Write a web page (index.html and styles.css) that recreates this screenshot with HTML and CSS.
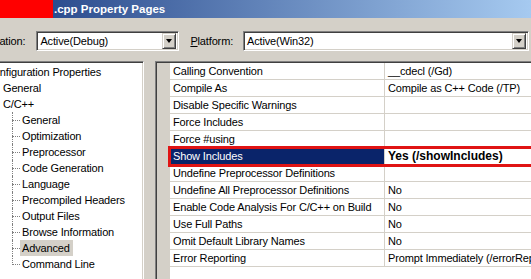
FILE: index.html
```html
<!DOCTYPE html>
<html lang="en">
<head>
    <meta charset="UTF-8">
    <title>Property Pages</title>
    <link rel="stylesheet" href="styles.css">
</head>
<body>
<div class="window">
    <div class="titlebar">
        <span class="redact"></span>
        <span class="title">.cpp Property Pages</span>
    </div>

    <div class="toolbar">
        <label class="cfg-label">Configuration:</label>
        <div class="combo combo-config">
            <span class="combo-text">Active(Debug)</span>
            <span class="drop"></span>
        </div>
        <label class="plat-label"><u>P</u>latform:</label>
        <div class="combo combo-platform">
            <span class="combo-text">Active(Win32)</span>
            <span class="drop"></span>
        </div>
    </div>

    <div class="main">
        <div class="tree">
            <div class="node root">Configuration Properties</div>
            <div class="node lvl1">General</div>
            <div class="node lvl1">C/C++</div>
            <ul class="children">
                <li>General</li>
                <li>Optimization</li>
                <li>Preprocessor</li>
                <li>Code Generation</li>
                <li>Language</li>
                <li>Precompiled Headers</li>
                <li>Output Files</li>
                <li>Browse Information</li>
                <li><span class="sel">Advanced</span></li>
                <li>Command Line</li>
            </ul>
        </div>

        <div class="grid">
            <div class="gutter"></div>
            <div class="rows">
                <div class="row"><div class="name">Calling Convention</div><div class="value">__cdecl (/Gd)</div></div>
                <div class="row"><div class="name">Compile As</div><div class="value">Compile as C++ Code (/TP)</div></div>
                <div class="row"><div class="name">Disable Specific Warnings</div><div class="value"></div></div>
                <div class="row"><div class="name">Force Includes</div><div class="value"></div></div>
                <div class="row"><div class="name">Force #using</div><div class="value"></div></div>
                <div class="row selected"><div class="name">Show Includes</div><div class="value">Yes (/showIncludes)</div></div>
                <div class="row"><div class="name">Undefine Preprocessor Definitions</div><div class="value"></div></div>
                <div class="row"><div class="name">Undefine All Preprocessor Definitions</div><div class="value">No</div></div>
                <div class="row"><div class="name">Enable Code Analysis For C/C++ on Build</div><div class="value">No</div></div>
                <div class="row"><div class="name">Use Full Paths</div><div class="value">No</div></div>
                <div class="row"><div class="name">Omit Default Library Names</div><div class="value">No</div></div>
                <div class="row"><div class="name">Error Reporting</div><div class="value">Prompt Immediately (/errorReport:prompt)</div></div>
            </div>
        </div>
    </div>
</div>
</body>
</html>
```

FILE: styles.css
```css
body {
    margin: 0;
    font-family: "Liberation Sans", Arial, sans-serif;
    font-size: 11px;
    letter-spacing: -0.15px;
    color: #000;
    background: #d4d0c8;
    overflow: hidden;
}

.window {
    width: 531px;
    height: 279px;
    overflow: hidden;
    display: flex;
    flex-direction: column;
}

/* title bar */
.titlebar {
    height: 18px;
    flex-shrink: 0;
    display: flex;
    align-items: center;
    background: linear-gradient(to right, #1f3f84, #a6caf0);
}

.redact {
    width: 53px;
    height: 18px;
    background: #ff0000;
}

.title {
    color: #fff;
    font-weight: bold;
    font-size: 11.5px;
    letter-spacing: 0;
    padding-left: 1px;
}

/* configuration / platform bar */
.toolbar {
    height: 43px;
    flex-shrink: 0;
    box-sizing: border-box;
    padding-top: 13px;
    display: flex;
    align-items: flex-start;
}

.cfg-label,
.plat-label {
    line-height: 20px;
    white-space: nowrap;
}

.cfg-label {
    margin-left: -41px;
    margin-right: 11px;
}

.plat-label {
    margin-left: 11px;
}

.combo {
    height: 20px;
    box-sizing: border-box;
    background: #fff;
    border: 1px solid;
    border-color: #808080 #fff #fff #808080;
    box-shadow: inset 1px 1px 0 #404040, inset -1px -1px 0 #d4d0c8;
    display: flex;
    align-items: center;
    padding: 0 2px 0 3px;
}

.combo-config {
    width: 143px;
}

.combo-platform {
    width: 286px;
    margin-left: auto;
    margin-right: 2px;
}

.combo-text {
    flex: 1;
    white-space: nowrap;
}

.drop {
    width: 14px;
    height: 16px;
    box-sizing: border-box;
    background: #d4d0c8;
    border: 1px solid;
    border-color: #d4d0c8 #404040 #404040 #d4d0c8;
    box-shadow: inset 1px 1px 0 #fff, inset -1px -1px 0 #808080;
    display: flex;
    align-items: center;
    justify-content: center;
}

.drop::after {
    content: "";
    border-left: 3.5px solid transparent;
    border-right: 3.5px solid transparent;
    border-top: 4px solid #000;
}

/* lower panels */
.main {
    flex: 1;
    min-height: 0;
    display: flex;
}

.tree {
    width: 144px;
    flex-shrink: 0;
    box-sizing: border-box;
    background: #fff;
    border-top: 1px solid #808080;
    border-right: 1px solid #fff;
    box-shadow: inset 0 1px 0 #404040, inset -1px 0 0 #d4d0c8;
    padding-top: 2px;
}

.node {
    line-height: 16px;
    white-space: nowrap;
}

.root {
    margin-left: -14px;
}

.lvl1 {
    padding-left: 3px;
}

.children {
    list-style: none;
    margin: 0;
    padding: 0;
}

.children li {
    position: relative;
    line-height: 16px;
    padding-left: 22px;
    white-space: nowrap;
}

.children li::before {
    content: "";
    position: absolute;
    left: 12px;
    top: 8px;
    width: 8px;
    border-top: 1px dotted #808080;
}

.children li::after {
    content: "";
    position: absolute;
    left: 12px;
    top: 0;
    height: 16px;
    border-left: 1px dotted #808080;
}

.children li:last-child::after {
    height: 9px;
}

.sel {
    display: inline-block;
    background: #d4d0c8;
    margin-left: -2px;
    padding: 0 3px 0 2px;
}

.grid {
    flex: 1;
    margin-left: 11px;
    display: flex;
    padding-top: 1px;
    border-top: 1px solid #808080;
    border-left: 1px solid #808080;
    box-shadow: inset 1px 1px 0 #404040;
}

.gutter {
    width: 14px;
    flex-shrink: 0;
}

.rows {
    flex: 1;
    background: #fff;
}

.row {
    display: flex;
    height: 17px;
    box-sizing: border-box;
    border-bottom: 1px solid #d4d0c8;
}

.name {
    width: 215px;
    flex-shrink: 0;
    box-sizing: border-box;
    border-right: 1px solid #d4d0c8;
    padding-left: 3px;
    line-height: 16px;
    white-space: nowrap;
    overflow: hidden;
}

.value {
    flex: 1;
    padding-left: 3px;
    line-height: 16px;
    white-space: nowrap;
    overflow: hidden;
}

.row.selected {
    outline: 3px solid #e01414;
    outline-offset: -1px;
}

.row.selected .name {
    background: #0a246a;
    color: #fff;
}

.row.selected .value {
    font-weight: bold;
    font-size: 12px;
    letter-spacing: 0;
}
```
